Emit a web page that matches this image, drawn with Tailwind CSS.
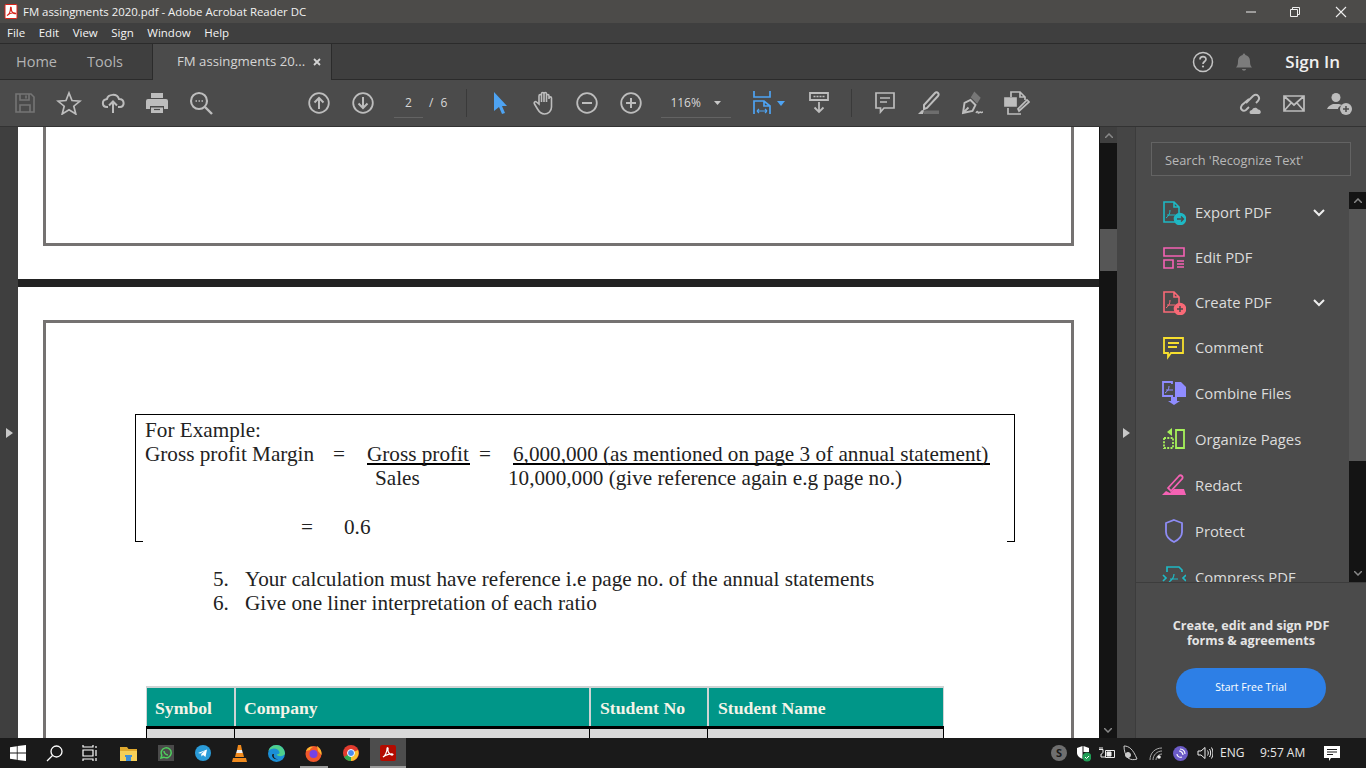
<!DOCTYPE html>
<html lang="en">
<head>
<meta charset="UTF-8">
<title>FM assingments 2020.pdf - Adobe Acrobat Reader DC</title>
<script src="https://cdn.jsdelivr.net/npm/@tailwindcss/browser@4"></script>
</head>
<body class="w-[1366px] h-[768px] overflow-hidden bg-[#1a1a1a] font-['Open_Sans',sans-serif]">
<div class="flex flex-col h-[768px]">

  <!-- title bar -->
  <div class="h-[23px] shrink-0 flex items-center bg-[#4c4b49] text-[#f2f2f2] text-[11.400px]">
    <svg class="ml-[4px] w-[14px] h-[15px]" viewBox="0 0 14 15"><rect x="1" y="0.5" width="12" height="14" rx="1" fill="#fff" stroke="#d8231a"/><path d="M3 11.500c2-1 3.500-4.500 3.500-7.500 0-1.500 1-1 .8.500-.4 3 2.200 5.500 4 5.300 1.200-.2 0-1.200-2-1-2 .2-4.300 1-6.300 2.700z" fill="none" stroke="#d8231a" stroke-width="1.100"/></svg>
    <span class="ml-[5px]">FM assingments 2020.pdf - Adobe Acrobat Reader DC</span>
    <div class="ml-auto flex h-full items-center">
      <svg class="w-[46px] h-[12px]" viewBox="0 0 46 12"><path d="M18 6h10" stroke="#eee" stroke-width="1"/></svg>
      <svg class="w-[46px] h-[12px]" viewBox="0 0 46 12"><path d="M16.500 3.500h7v7h-7zM18.500 3.500v-2h7v7h-2" fill="none" stroke="#eee"/></svg>
      <svg class="w-[46px] h-[12px]" viewBox="0 0 46 12"><path d="M16 1l10 10M26 1l-10 10" stroke="#eee" stroke-width="1.100"/></svg>
    </div>
  </div>

  <!-- menu -->
  <div class="h-[20px] shrink-0 flex items-center gap-[13.500px] pl-[7px] bg-[#3f3f3f] text-[#f4f4f4] text-[11.500px]">
    <span>File</span><span>Edit</span><span>View</span><span>Sign</span><span>Window</span><span>Help</span>
  </div>

  <!-- tabs -->
  <div class="h-[37px] shrink-0 flex bg-[#3f3f3f] border-t border-b border-[#2b2b2b] text-[14.500px] text-[#b4b4b4]">
    <div class="w-[152px] flex items-center pl-[16px] gap-[30px]"><span>Home</span><span>Tools</span></div>
    <div class="w-[180px] h-[36px] flex items-center pl-[24px] bg-[#4b4b4b] border-l border-r border-[#2b2b2b] text-[13.200px] text-[#d4d4d4]">
      <span>FM assingments 20...</span>
      <svg class="ml-[8px] w-[8px] h-[8px]" viewBox="0 0 8 8"><path d="M1 1l6 6M7 1l-6 6" stroke="#d4d4d4" stroke-width="1.800"/></svg>
    </div>
    <div class="ml-auto flex items-center">
      <svg class="w-[22px] h-[22px] mr-[21px]" viewBox="0 0 22 22" fill="none"><circle cx="11" cy="11" r="9.500" stroke="#c4c4c4" stroke-width="1.500"/><path d="M8 8.500c0-3.800 6-3.800 6-.2 0 2.200-3 2.200-3 4.700" stroke="#c4c4c4" stroke-width="1.700"/><circle cx="11" cy="15.500" r="1.100" fill="#c4c4c4"/></svg>
      <svg class="w-[18px] h-[20px] mr-[32px]" viewBox="0 0 18 20"><path d="M1 15.500c1.500-1.500 2-3 2-6.500 0-3 2-5.500 4.700-6 .2-2 2.400-2 2.600 0 2.700.5 4.700 3 4.700 6 0 3.500.5 5 2 6.500zM7 17h4c0 2.200-4 2.200-4 0z" fill="#7c7c7c"/></svg>
      <span class="mr-[26px] text-[17px] font-semibold text-[#f0f0f0]">Sign In</span>
    </div>
  </div>

  <!-- toolbar -->
  <div class="h-[47px] shrink-0 flex items-center bg-[#4b4b4b] border-b border-[#333] pl-[3px] text-[#d8d8d8] text-[12px]">
    <div class="w-[44px] flex justify-center"><svg class="w-[22px] h-[22px]" viewBox="0 0 22 22" fill="none" stroke="#757575" stroke-width="1.600"><path d="M2 2h15l3 3v15H2zM6 2v6h9V2M12 3.500v3M6 20v-7h10v7"/></svg></div>
    <div class="w-[44px] flex justify-center"><svg class="w-[26px] h-[24px]" viewBox="0 0 26 24" fill="none" stroke="#bdbdbd" stroke-width="1.700"><path d="M13 2l3 7.500 8 .6-6.200 5.100 2 7.800-6.800-4.200L6.200 23l2-7.800L2 10.100l8-.6z"/></svg></div>
    <div class="w-[44px] flex justify-center"><svg class="w-[24px] h-[22px]" viewBox="0 0 24 22" fill="none" stroke="#bdbdbd" stroke-width="2"><path d="M7 15H6C1 15 0 8 6 7c1-5 10-6 12 0 6 0 6 8 1 8h-2M12 21V10M8 13.500l4-4 4 4"/></svg></div>
    <div class="w-[43px] flex justify-center"><svg class="w-[22px] h-[22px]" viewBox="0 0 22 22"><path d="M5 1h12v5H5zM2 7h18a2 2 0 0 1 2 2v8h-4v-3H4v3H0V9a2 2 0 0 1 2-2zM5 15.500h12V21H5z" fill="#bdbdbd"/><path d="M8 17.500h6" stroke="#4b4b4b" stroke-width="1.200"/></svg></div>
    <div class="w-[45px] flex justify-center"><svg class="w-[24px] h-[24px]" viewBox="0 0 24 24" fill="none" stroke="#bdbdbd" stroke-width="2.100"><circle cx="10" cy="10" r="8"/><path d="M16 16l7 7" stroke-width="2.400"/><path d="M6.500 10h1.500M9.500 10h1.500M12.500 10h1.500" stroke-width="1.600"/></svg></div>
    <div class="w-[74px]"></div>
    <div class="w-[44px] flex justify-center"><svg class="w-[22px] h-[22px]" viewBox="0 0 22 22" fill="none" stroke="#bdbdbd" stroke-width="1.800"><circle cx="11" cy="11" r="9.800"/><path d="M11 17V6M6.500 10.500L11 6l4.500 4.500" stroke-width="2"/></svg></div>
    <div class="w-[44px] flex justify-center"><svg class="w-[22px] h-[22px]" viewBox="0 0 22 22" fill="none" stroke="#bdbdbd" stroke-width="1.800"><circle cx="11" cy="11" r="9.800"/><path d="M11 5v11M6.500 11.500L11 16l4.500-4.500" stroke-width="2"/></svg></div>
    <div class="ml-[9px] w-[29px] h-[30px] flex items-center justify-center border-b border-[#636363]">2</div>
    <span class="ml-[6px] tracking-[2px]">/ 6</span>
    <div class="ml-[17px] w-px h-[28px] bg-[#3a3a3a]"></div>
    <div class="ml-[11px] w-[44px] flex justify-center"><svg class="w-[14px] h-[22px]" viewBox="0 0 14 22"><path d="M1 0l13 14H9l3 7-3 1-3-7-5 4z" fill="#4ea3f2"/></svg></div>
    <div class="w-[43px] flex justify-center"><svg class="w-[22px] h-[24px]" viewBox="0 0 22 24" fill="none" stroke="#bdbdbd" stroke-width="1.600"><path d="M6 13V5c0-2 2.500-2 2.500 0v6V3c0-2 2.500-2 2.500 0v8V3c0-2 2.500-2 2.500 0v8V5c0-2 2.500-2 2.500 0v3-1c0-1.500 2.500-1.500 2.500 0v9c0 4-3 7-7 7-3.500 0-5-1.500-7-5l-3-5c-1-2 1-3 2-2z"/></svg></div>
    <div class="w-[44px] flex justify-center"><svg class="w-[22px] h-[22px]" viewBox="0 0 22 22" fill="none" stroke="#bdbdbd" stroke-width="1.800"><circle cx="11" cy="11" r="9.800"/><path d="M6 11h10" stroke-width="2"/></svg></div>
    <div class="w-[44px] flex justify-center"><svg class="w-[22px] h-[22px]" viewBox="0 0 22 22" fill="none" stroke="#bdbdbd" stroke-width="1.800"><circle cx="11" cy="11" r="9.800"/><path d="M6 11h10M11 6v10" stroke-width="2"/></svg></div>
    <div class="ml-[8px] w-[70px] h-[30px] flex items-center border-b border-[#636363] pl-[9px]">
      <span>116%</span>
      <svg class="ml-[13px] w-[7px] h-[4px]" viewBox="0 0 7 4"><path d="M0 0h7L3.500 4z" fill="#c8c8c8"/></svg>
    </div>
    <div class="ml-[22px] flex items-center w-[37px]">
      <svg class="w-[18px] h-[24px]" viewBox="0 0 18 24" fill="none" stroke="#4ea3f2" stroke-width="1.700"><path d="M1 0v6h16V0M1 23V10h10l6 5v8M11 10v5h6"/><path d="M4 20h10M4 20l2-2M4 20l2 2M14 20l-2-2M14 20l-2 2" stroke-width="1.200"/></svg>
      <svg class="ml-[6px] w-[8px] h-[5px]" viewBox="0 0 8 5"><path d="M0 0h8L4 5z" fill="#4ea3f2"/></svg>
    </div>
    <div class="ml-[7px] w-[44px] flex justify-center"><svg class="w-[20px] h-[22px]" viewBox="0 0 20 22" fill="none" stroke="#bdbdbd" stroke-width="1.800"><path d="M1 1h18v7H1zM10 10v10M5.500 15.500L10 20l4.500-4.500"/><path d="M4.500 4.500h11" stroke-dasharray="2 1" stroke-width="1.500"/></svg></div>
    <div class="ml-[10px] w-px h-[28px] bg-[#3a3a3a]"></div>
    <div class="ml-[11px] w-[44px] flex justify-center"><svg class="w-[20px] h-[22px]" viewBox="0 0 20 22" fill="none" stroke="#bdbdbd" stroke-width="1.700"><path d="M1 1h18v15H9l-3.500 4v-4H1zM5 6h10M5 10h7"/></svg></div>
    <div class="w-[44px] flex justify-center"><svg class="w-[24px] h-[24px]" viewBox="0 0 24 24"><path d="M7 14L18 2c2-2 5 1 3 3L10 17l-3 1z" fill="none" stroke="#bdbdbd" stroke-width="2"/><path d="M1 23l4-4 2 .5-1 3.500z" fill="#bdbdbd"/><path d="M7 19.500h15V23H7z" fill="#6e6e6e"/></svg></div>
    <div class="w-[44px] flex justify-center"><svg class="w-[24px] h-[24px]" viewBox="0 0 24 24" fill="none" stroke="#bdbdbd" stroke-width="1.900"><path d="M2 22l1.500-10 6-3 5 5-3 6zM2 22l5.500-5.500"/><path d="M10.500 7l3-5 5 5-3 5" stroke="#777" fill="#777"/><path d="M15 22c1-2 2-2 2-.5s1.500 0 2-.5.500 1 1.500.5 1-.5 1.500-.5" stroke-width="1.400"/></svg></div>
    <div class="w-[44px] flex justify-center"><svg class="w-[26px] h-[24px]" viewBox="0 0 26 24" fill="none" stroke="#bdbdbd" stroke-width="1.700"><path d="M7 6V1h9l5 5v3M16 1v5h5M4 17v6h13"/><path d="M1 7h11v8H1z" fill="#bdbdbd"/><path d="M15 20l10-9-2-2-9 9z"/></svg></div>
    <div class="ml-auto flex items-center mr-[14px]">
      <svg class="w-[26px] h-[24px] mr-[20px]" viewBox="0 0 26 24" fill="none" stroke="#bdbdbd" stroke-width="1.900"><path d="M9 12l7-7c4-3 8 1 5 5l-2 2M12 8L5 14c-3 4 1 7 4 5l3-3"/><path d="M14 23c-2 0-2-4 1-4 1-3 5-3 6-.5 3-.5 4 4.500 1 4.500z" fill="#bdbdbd" stroke="none"/></svg>
      <svg class="w-[22px] h-[17px] mr-[22px]" viewBox="0 0 22 17" fill="none" stroke="#bdbdbd" stroke-width="1.700"><path d="M1 1h20v15H1zM1 1l10 9 10-9M1 16l7-8M21 16l-7-8"/></svg>
      <svg class="w-[25px] h-[23px]" viewBox="0 0 25 23"><circle cx="9" cy="5.500" r="4.500" fill="#bdbdbd"/><path d="M0 17c1-3 4-4 6-5h6c1 0 2 1 3 1-3 1-4 3-4 4z" fill="#bdbdbd"/><circle cx="19" cy="17" r="6" fill="#bdbdbd"/><path d="M16 17h6M19 14v6" stroke="#4b4b4b" stroke-width="1.500"/></svg>
    </div>
  </div>

  <!-- main -->
  <div class="h-[611px] shrink-0 flex overflow-hidden">
    <div class="w-[18px] shrink-0 flex items-center pl-[6px] bg-[#3f3f3f]">
      <svg class="w-[7px] h-[10px]" viewBox="0 0 7 10"><path d="M0 0l7 5-7 5z" fill="#c8c8c8"/></svg>
    </div>

    <!-- document -->
    <div class="w-[1081px] shrink-0 h-full overflow-hidden bg-[#222]">
      <div class="h-[152px] bg-white px-[25px]">
        <div class="h-[119px] w-[1031px] border-[3px] border-t-0 border-[#757271]"></div>
      </div>
      <div class="h-[8px]"></div>
      <div class="h-[460px] bg-white px-[25px] pt-[33px] font-['Liberation_Serif',serif] text-[21.200px] leading-[24px] text-[#222]">
        <div class="h-[500px] w-[1031px] border-[3px] border-[#757271] pt-[91px]">
          <div class="relative ml-[89px] w-[880px] h-[128px] border border-b-0 border-black pt-[3px] pl-[9px]">
            <div>For Example:</div>
            <div class="flex">
              <span class="w-[188px] whitespace-nowrap">Gross profit Margin</span>
              <span class="w-[34px]">=</span>
              <span class="w-[103px] border-b-2 border-black h-[23px] whitespace-nowrap">Gross profit</span>
              <span class="ml-[9px] w-[34px]">=</span>
              <span class="w-[477px] border-b-2 border-black h-[23px] whitespace-nowrap">6,000,000 (as mentioned on page 3 of annual statement)</span>
            </div>
            <div class="flex">
              <span class="ml-[230px] w-[133px]">Sales</span>
              <span class="whitespace-nowrap">10,000,000 (give reference again e.g page no.)</span>
            </div>
            <div class="h-[25px]"></div>
            <div class="flex">
              <span class="ml-[156px] w-[43px]">=</span>
              <span>0.6</span>
            </div>
            <div class="absolute left-0 bottom-0 w-[7px] h-px bg-black"></div>
            <div class="absolute right-0 bottom-0 w-[7px] h-px bg-black"></div>
          </div>
          <div class="mt-[25px] ml-[167px] flex"><span class="w-[32px]">5.</span><span class="whitespace-nowrap">Your calculation must have reference i.e page no. of the annual statements</span></div>
          <div class="ml-[167px] flex"><span class="w-[32px]">6.</span><span class="whitespace-nowrap">Give one liner interpretation of each ratio</span></div>
          <div class="mt-[71px] ml-[100px] w-[798px] border-t-2 border-x border-[#cfd4d4] bg-[#cfd4d4] text-[17.700px] font-bold text-[#f4f4e8]">
            <div class="flex gap-[2px] h-[38px] items-center">
              <div class="w-[87px] h-full bg-[#009688] flex items-center pl-[8px] pt-[2px]">Symbol</div>
              <div class="w-[353px] h-full bg-[#009688] flex items-center pl-[8px] pt-[2px]">Company</div>
              <div class="w-[116px] h-full bg-[#009688] flex items-center pl-[9px] pt-[2px]">Student No</div>
              <div class="flex-1 h-full bg-[#009688] flex items-center pl-[9px] pt-[2px]">Student Name</div>
            </div>
          </div>
          <div class="ml-[100px] w-[798px] h-[12px] border-t-[3px] border-x border-black bg-[#d9d9d9] flex">
            <div class="w-[88px] border-r border-black"></div>
            <div class="w-[355px] border-r border-black"></div>
            <div class="w-[118px] border-r border-black"></div>
          </div>
        </div>
      </div>
    </div>

    <!-- doc scrollbar -->
    <div class="w-[18px] shrink-0 bg-[#141414] flex flex-col">
      <div class="h-[16px] ml-[1px] bg-[#3f3f3f] flex items-center justify-center">
        <svg class="w-[8px] h-[5px]" viewBox="0 0 8 5"><path d="M0 5l4-4 4 4" fill="none" stroke="#888" stroke-width="1.500"/></svg>
      </div>
      <div class="mt-[86px] h-[42px] ml-[1px] bg-[#565656]"></div>
      <div class="mt-auto h-[16px] flex items-center justify-center">
        <svg class="w-[8px] h-[5px]" viewBox="0 0 8 5"><path d="M0 0l4 4 4-4" fill="none" stroke="#888" stroke-width="1.500"/></svg>
      </div>
    </div>

    <!-- panel handle -->
    <div class="w-[19px] shrink-0 flex items-center pl-[6px] bg-[#454545] border-r border-[#3c3c3c]">
      <svg class="w-[7px] h-[10px]" viewBox="0 0 7 10"><path d="M0 0l7 5-7 5z" fill="#c8c8c8"/></svg>
    </div>

    <!-- tools panel -->
    <div class="w-[230px] shrink-0 flex flex-col bg-[#4b4b4b] text-[#dcdcdc] text-[14.800px]">
      <div class="h-[65px] shrink-0 pt-[15px] pl-[15px]">
        <div class="w-[200px] h-[34px] bg-[#484848] border border-[#636363] flex items-center pl-[13px] pt-[3px] text-[12.800px] text-[#b8b8b8]">Search 'Recognize Text'</div>
      </div>
      <div class="h-[391px] shrink-0 flex overflow-hidden border-b border-[#3c3c3c]">
        <div class="w-[213px] shrink-0 pl-[26px] -mt-[2px]">
          <div class="h-[45px] flex items-center">
            <svg class="w-[24px] h-[24px] shrink-0" viewBox="0 0 24 24" fill="none" stroke="#1fb8c4" stroke-width="1.600"><path d="M13 21H2V1h10l5 5v6M12 1v5h5"/><path d="M4 17c3-2 4-5 4-8M5 14h8" stroke-width="1"/><circle cx="18" cy="18" r="5.500" fill="#1fb8c4"/><path d="M15 18h6M19 15.500l2.500 2.500-2.500 2.500" stroke="#4b4b4b" stroke-width="1.300"/></svg>
            <span class="ml-[9px]">Export PDF</span>
            <svg class="ml-auto mr-[24px] w-[12px] h-[8px]" viewBox="0 0 12 8"><path d="M1 1l5 5 5-5" fill="none" stroke="#eee" stroke-width="2"/></svg>
          </div>
          <div class="h-[45px] flex items-center">
            <svg class="w-[24px] h-[24px] shrink-0" viewBox="0 0 24 24" fill="none" stroke="#f562b4" stroke-width="1.600"><path d="M2 2h20v8H2zM2 14h9v8H2zM15 15h7M15 18h7M15 21h7"/></svg>
            <span class="ml-[9px]">Edit PDF</span>
          </div>
          <div class="h-[45px] flex items-center">
            <svg class="w-[24px] h-[24px] shrink-0" viewBox="0 0 24 24" fill="none" stroke="#f96a77" stroke-width="1.600"><path d="M13 21H2V1h10l5 5v6M12 1v5h5"/><path d="M4 17c3-2 4-5 4-8M5 14h8" stroke-width="1"/><circle cx="18" cy="18" r="5.500" fill="#f96a77"/><path d="M15 18h6M18 15v6" stroke="#4b4b4b" stroke-width="1.500"/></svg>
            <span class="ml-[9px]">Create PDF</span>
            <svg class="ml-auto mr-[24px] w-[12px] h-[8px]" viewBox="0 0 12 8"><path d="M1 1l5 5 5-5" fill="none" stroke="#eee" stroke-width="2"/></svg>
          </div>
          <div class="h-[45px] flex items-center">
            <svg class="w-[24px] h-[24px] shrink-0" viewBox="0 0 24 24" fill="none" stroke="#f7df2e" stroke-width="1.800"><path d="M2 2h19v15H9l-3 4v-4H2zM6 7h11M6 11h9"/></svg>
            <span class="ml-[9px]">Comment</span>
          </div>
          <div class="h-[46px] flex items-center">
            <svg class="w-[24px] h-[24px] shrink-0" viewBox="0 0 24 24"><path d="M11 15H1V1h9v2" fill="none" stroke="#8f8cff" stroke-width="1.800"/><path d="M3 12c3-2 4-4 4-7M4 9h7" fill="none" stroke="#8f8cff"/><path d="M13 1h6l5 5v10H13z" fill="#8f8cff"/><path d="M9 16h6v4h3l-6 4-6-4h3z" fill="#8f8cff"/></svg>
            <span class="ml-[9px]">Combine Files</span>
          </div>
          <div class="h-[46px] flex items-center">
            <svg class="w-[24px] h-[24px] shrink-0" viewBox="0 0 24 24" fill="none" stroke="#a6f25a" stroke-width="1.800"><path d="M14 3h8v18h-8z"/><path d="M2 11v10h9V11M2 11h9" stroke-dasharray="2 1.300"/><path d="M10 1L5 5l5 4z" fill="#a6f25a" stroke="none"/></svg>
            <span class="ml-[9px]">Organize Pages</span>
          </div>
          <div class="h-[46px] flex items-center">
            <svg class="w-[24px] h-[24px] shrink-0" viewBox="0 0 24 24"><path d="M6 15L17 3c2-2 5 1 3 3L9 18z" fill="none" stroke="#f562b4" stroke-width="1.800"/><path d="M0 22l4-4 4 2 4-4h10l2 6z" fill="#f562b4"/></svg>
            <span class="ml-[9px]">Redact</span>
          </div>
          <div class="h-[46px] flex items-center">
            <svg class="w-[24px] h-[24px] shrink-0" viewBox="0 0 24 24" fill="none" stroke="#8e8cf5" stroke-width="1.800"><path d="M12 1l8 3v9c0 5-4 8-8 10-4-2-8-5-8-10V4z"/></svg>
            <span class="ml-[9px]">Protect</span>
          </div>
          <div class="h-[46px] flex items-center">
            <svg class="w-[24px] h-[24px] shrink-0" viewBox="0 0 24 24" fill="none" stroke="#1fb8c4" stroke-width="1.700"><path d="M5 7V2h12l3 3v2M5 22v-2M20 22v-2M1 10l3 3-3 3M24 10l-3 3 3 3"/><path d="M7 17c3-2 5-5 5-8M8 14h8" stroke-width="1.200"/></svg>
            <span class="ml-[9px]">Compress PDF</span>
          </div>
        </div>
        <div class="w-[17px] shrink-0 bg-[#141414] flex flex-col">
          <div class="h-[17px] flex items-center justify-center"><svg class="w-[8px] h-[5px]" viewBox="0 0 8 5"><path d="M0 5l4-4 4 4" fill="none" stroke="#888" stroke-width="1.500"/></svg></div>
          <div class="h-[252px] bg-[#565656]"></div>
          <div class="mt-auto h-[17px] flex items-center justify-center"><svg class="w-[8px] h-[5px]" viewBox="0 0 8 5"><path d="M0 0l4 4 4-4" fill="none" stroke="#888" stroke-width="1.500"/></svg></div>
        </div>
      </div>
      <div class="flex-1 flex flex-col items-center pt-[35px] bg-[#4b4b4b]">
        <div class="text-center text-[12.600px] leading-[15px] font-bold text-[#e4e4e4]">Create, edit and sign PDF<br>forms &amp; agreements</div>
        <div class="mt-[20px] w-[150px] h-[40px] rounded-full bg-[#2d7fe6] flex items-center justify-center text-[10.500px] font-medium text-white">Start Free Trial</div>
      </div>
    </div>
  </div>

  <!-- taskbar -->
  <div class="h-[30px] shrink-0 flex items-center bg-[#1a1a1a] text-[#e8e8e8] text-[12px]">
    <div class="w-[36px] flex justify-center"><svg class="w-[16px] h-[16px]" viewBox="0 0 16 16" fill="#fff"><path d="M0 2.200l6.800-1v6.400H0zM7.600 1.100L16 0v7.600H7.600zM0 8.400h6.800v6.400L0 13.800zM7.600 8.400H16V16l-8.400-1.100z"/></svg></div>
    <div class="w-[36px] flex justify-center"><svg class="w-[17px] h-[17px]" viewBox="0 0 17 17" fill="none" stroke="#fff" stroke-width="1.300"><circle cx="10.500" cy="6.500" r="5.500"/><path d="M6.500 10.500L1 16"/></svg></div>
    <div class="w-[36px] flex justify-center"><svg class="w-[16px] h-[16px]" viewBox="0 0 16 16" fill="none" stroke="#fff" stroke-width="1.200"><path d="M1 0v2h10V0M1 5h10v6H1zM1 16v-2h10v2M14 1v2M14 5v6M14 13v3"/></svg></div>
    <div class="ml-[2px] w-[37px] flex justify-center"><svg class="w-[17px] h-[15px]" viewBox="0 0 17 15"><path d="M0 1h7l1.500 2H17v3H0z" fill="#e0a92e"/><path d="M0 5h17v10H0z" fill="#f6cf57"/><path d="M5 9h7v2H5z" fill="#3f8fd6"/><path d="M6 11h5v4H6z" fill="#3f8fd6"/></svg></div>
    <div class="w-[37px] flex justify-center"><div class="w-[16px] h-[16px] bg-[#4a4a4a] flex items-center justify-center"><svg class="w-[12px] h-[12px]" viewBox="0 0 12 12"><path d="M1 11l.8-2.800A5 5 0 1 1 3.800 10.200z" fill="none" stroke="#4fce5d" stroke-width="1.500"/><path d="M4 4c0 2 2 4 4 4" stroke="#4fce5d" stroke-width="1.500" fill="none"/></svg></div></div>
    <div class="w-[37px] flex justify-center"><svg class="w-[16px] h-[16px]" viewBox="0 0 16 16"><circle cx="8" cy="8" r="8" fill="#2a9bd8"/><path d="M3 8l9-3.500-1.500 7.500-2.500-2-1.500 1.500-.3-2.500 4-3.500-5 3z" fill="#fff"/></svg></div>
    <div class="w-[37px] flex justify-center"><svg class="w-[15px] h-[17px]" viewBox="0 0 15 17"><path d="M6 0h3l1 5H5z" fill="#f08a1d"/><path d="M5 5h5l.8 3H4.200z" fill="#eee"/><path d="M4 8h7l1 4H3z" fill="#f08a1d"/><path d="M1 13h13l1 4H0z" fill="#f08a1d"/></svg></div>
    <div class="w-[37px] flex justify-center"><svg class="w-[17px] h-[17px]" viewBox="0 0 17 17"><circle cx="8.500" cy="8.500" r="8.500" fill="#1b8fd6"/><path d="M17 9c0-5-4-9-8.500-9C4 0 1 3 .5 6c2-3 9-4 11 1 .5 1.500-1 2.500-3 2.500 1 2 6 2.500 8.500-.5z" fill="#4fd08c"/><path d="M4 10c0 3 3 5 6 4-3 0-5-2-4-5-1 0-2 0-2 1z" fill="#1a1a1a"/></svg></div>
    <div class="w-[37px] h-full flex flex-col items-center justify-center relative"><svg class="w-[17px] h-[17px]" viewBox="0 0 17 17"><circle cx="8.500" cy="9" r="8" fill="#f0572b"/><path d="M12 1c3 2 5 5 4.500 9L13 6z" fill="#ffb52e"/><circle cx="8.500" cy="9" r="4" fill="#7542e5"/><path d="M1 6c1-3 4-5 7-4-2 1-3 2-3 3z" fill="#ffb52e"/></svg><div class="absolute bottom-0 left-[5px] w-[28px] h-[2px] bg-[#9a9a9a]"></div></div>
    <div class="w-[37px] flex justify-center"><svg class="w-[16px] h-[16px]" viewBox="0 0 16 16"><circle cx="8" cy="8" r="8" fill="#e33b2e"/><path d="M8 8L1 12a8 8 0 0 0 7 4z" fill="#2fa84f"/><path d="M8 8l7-3a8 8 0 0 1-7 11z" fill="#fbc02d"/><circle cx="8" cy="8" r="3.500" fill="#4a8cf0" stroke="#fff"/></svg></div>
    <div class="ml-[1px] w-[36px] h-full bg-[#4d4d4d] flex justify-center items-center relative"><div class="w-[16px] h-[16px] rounded-[2px] bg-[#b30b00] flex items-center justify-center"><svg class="w-[12px] h-[12px]" viewBox="0 0 12 12"><path d="M1 10c2-1 4-5 4-8 0-2 1.500-1.500 1 .5-.5 3 3 6 4.500 5.500 1.500-.5-.5-1.500-2.500-1-2 .5-5 1-7 3z" fill="none" stroke="#fff" stroke-width="1.200"/></svg></div><div class="absolute bottom-0 left-0 w-full h-[2px] bg-[#9a9a9a]"></div></div>

    <div class="ml-auto flex items-center h-full">
      <div class="w-[16px] h-[16px] rounded-full bg-[#6f6f6f] flex items-center justify-center text-[11px] font-bold text-[#1a1a1a]">S</div>
      <svg class="ml-[9px] w-[15px] h-[17px]" viewBox="0 0 15 17"><path d="M6.500 1L1 3v5c0 3 3 5 5.500 6V1z" fill="#fff"/><path d="M7.500 1L13 3v4H7.500z" fill="#fff"/><circle cx="11" cy="12" r="4.500" fill="#1f9d55"/><path d="M9 12l1.500 1.500L13 11" stroke="#fff" fill="none"/></svg>
      <svg class="ml-[8px] w-[16px] h-[12px]" viewBox="0 0 16 12" fill="none" stroke="#eee"><path d="M6.500 3.500h9v7h-9zM1 0v2M3 0v2M0 2.500h4V5c0 1-1 2-2 2v3h4.500"/><path d="M8 5h4v4H8z" fill="#eee"/></svg>
      <svg class="ml-[8px] w-[15px] h-[16px]" viewBox="0 0 15 16" fill="none" stroke="#ccc"><path d="M1 1c5 0 9 3 13 13-3 1-6 1-9-1-3-3-4-8-4-12z"/><circle cx="5" cy="10" r="2.500" fill="#ccc"/></svg>
      <svg class="ml-[11px] w-[13px] h-[13px]" viewBox="0 0 13 13" fill="none" stroke="#aaa"><path d="M1 13C1 6 6 1 13 1M4 13c0-5 4-9 9-9M7 13c0-3 3-6 6-6"/><circle cx="10" cy="10" r="1.800" fill="#eee" stroke="none"/></svg>
      <svg class="ml-[11px] w-[15px] h-[15px]" viewBox="0 0 15 15"><circle cx="7.500" cy="7.500" r="7.500" fill="#6c5bc7"/><path d="M7 3c3 0 5 2 5 5M6 5c2 0 4 2 4 4M4 8c0 2 2 4 5 3" fill="none" stroke="#fff" stroke-width="1.100"/></svg>
      <svg class="ml-[9px] w-[16px] h-[14px]" viewBox="0 0 16 14" fill="none" stroke="#eee"><path d="M1 5h3l4-3.500v11L4 9H1zM10.500 4.500c1 1.500 1 3.500 0 5M12.500 3c1.500 2 1.500 6 0 8M14.500 1.500c2 3 2 8 0 11"/></svg>
      <span class="ml-[7px] w-[26px]">ENG</span>
      <span class="ml-[14px] w-[45px] whitespace-nowrap">9:57 AM</span>
      <svg class="ml-[19px] w-[16px] h-[15px]" viewBox="0 0 16 15"><path d="M0 0h16v12H7l-2 3v-3H0z" fill="#fff"/><path d="M3 3.500h10M3 6h10M3 8.500h6" stroke="#1a1a1a"/></svg>
      <div class="w-[26px]"></div>
    </div>
  </div>
</div>
</body>
</html>
